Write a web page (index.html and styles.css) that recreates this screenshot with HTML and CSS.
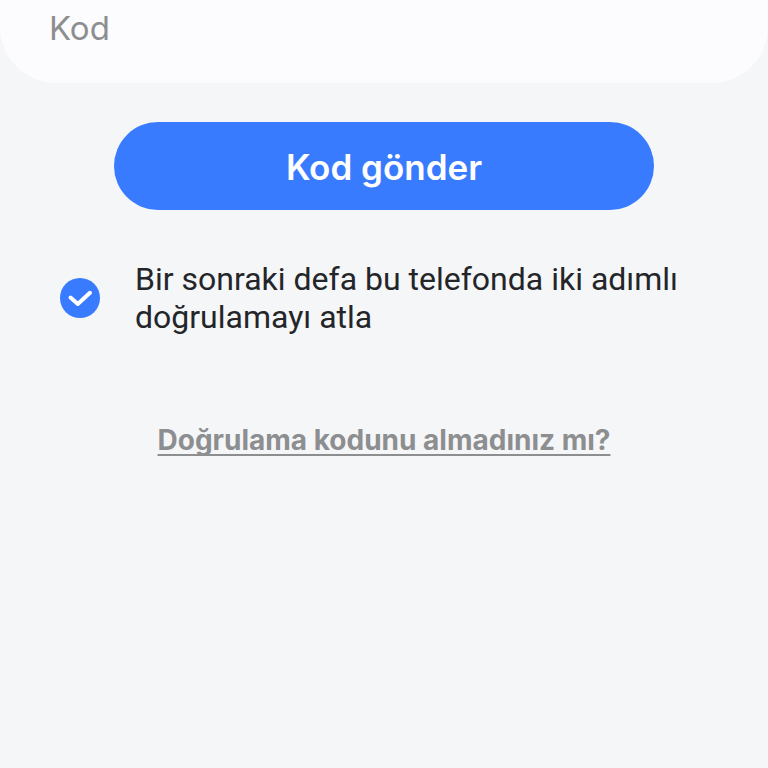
FILE: index.html
```html
<!DOCTYPE html>
<html lang="tr">
<head>
    <meta charset="UTF-8">
    <meta name="viewport" content="width=device-width, initial-scale=1.0">
    <title>İki adımlı doğrulama</title>
    <link rel="stylesheet" href="styles.css">
</head>
<body>

    <form class="verify">
        <div class="card">
            <input type="text" class="code-input" id="code" placeholder="Kod" aria-label="Kod">
        </div>

        <button type="button" class="send-button">Kod gönder</button>

        <div class="skip">
            <span class="check">
                <input type="checkbox" id="skip" checked>
                <svg viewBox="0 0 40 40" aria-hidden="true">
                    <path d="M10.5 19.5 L17.8 26 L30 14.8" />
                </svg>
            </span>
            <label for="skip">Bir sonraki defa bu telefonda iki adımlı doğrulamayı atla</label>
        </div>

        <a href="#" class="help-link">Doğrulama kodunu almadınız mı?</a>
    </form>

</body>
</html>
```
FILE: styles.css
```css
* {
    box-sizing: border-box;
}

body {
    margin: 0;
    background: #f5f6f8;
    color: #242529;
    font-family: Roboto, sans-serif;
}

.verify {
    display: flex;
    flex-direction: column;
    align-items: center;
}

.card {
    width: 100%;
    padding: 0 49px 27px;
    background: #fcfcfe;
    border-radius: 0 0 56px 56px;
}

.code-input {
    display: block;
    width: 100%;
    height: 56px;
    padding: 0;
    border: none;
    outline: none;
    background: transparent;
    color: #242529;
    font-family: Inter, sans-serif;
    font-size: 33px;
}

.code-input::placeholder {
    color: #8d8e90;
    opacity: 1;
}

.send-button {
    width: calc(100% - 228px);
    height: 88px;
    margin-top: 39px;
    padding: 2px 0 0;
    border: none;
    border-radius: 44px;
    background: #387bff;
    color: white;
    font-family: Inter, sans-serif;
    font-size: 35px;
    font-weight: 600;
    cursor: pointer;
}

.skip {
    display: flex;
    align-items: center;
    gap: 35px;
    width: 100%;
    padding: 50px 60px 0;
}

.skip label {
    font-size: 32px;
    line-height: 38px;
}

.check {
    position: relative;
    flex: none;
    width: 40px;
    height: 40px;
}

.check input {
    appearance: none;
    display: block;
    width: 40px;
    height: 40px;
    margin: 0;
    border: 2px solid #b4b6ba;
    border-radius: 50%;
    cursor: pointer;
}

.check input:checked {
    border: none;
    background: #387bff;
}

.check svg {
    position: absolute;
    inset: 0;
    fill: none;
    stroke: white;
    stroke-width: 4;
    stroke-linecap: round;
    stroke-linejoin: round;
    pointer-events: none;
}

.help-link {
    margin-top: 85px;
    color: #8d8e90;
    font-family: Inter, sans-serif;
    font-size: 28px;
    font-weight: 650;
    line-height: 38px;
    text-decoration-thickness: 2px;
    text-decoration-skip-ink: none;
    text-underline-offset: 4px;
}
```
